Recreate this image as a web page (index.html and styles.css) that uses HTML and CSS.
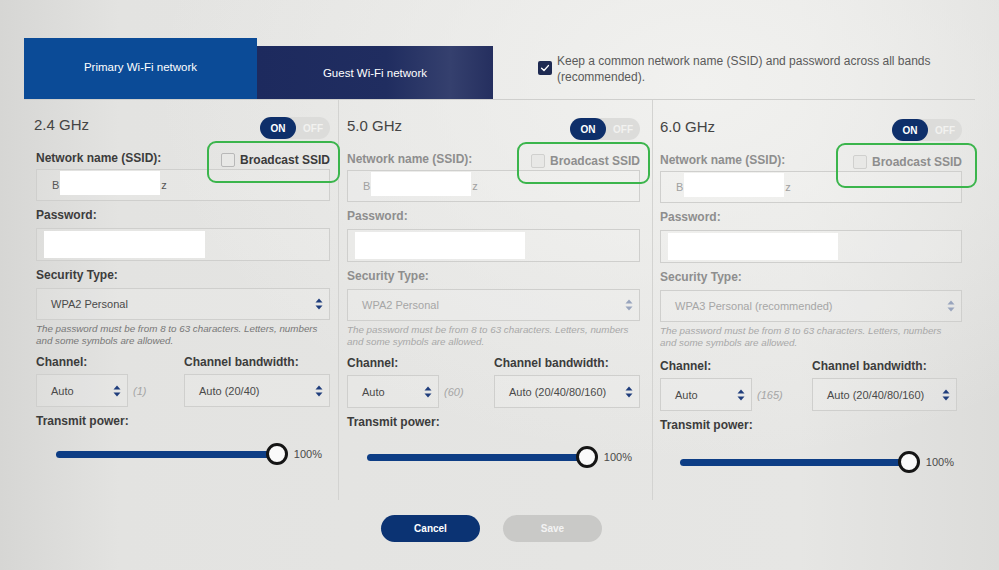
FILE: index.html
```html
<!DOCTYPE html>
<html lang="en">
<head>
<meta charset="utf-8">
<title>Wi-Fi settings</title>
<link rel="stylesheet" href="styles.css">
</head>
<body>
<div class="page">
  <div class="top">
    <div class="tabs">
      <div class="tab tab-primary">Primary Wi-Fi network</div>
      <div class="tab tab-guest">Guest Wi-Fi network</div>
    </div>
    <div class="common">
      <span class="cb-checked"><svg viewBox="0 0 14 14" width="14" height="14"><path d="M3.6 7.2 L6 9.5 L10.4 4.6" fill="none" stroke="#fff" stroke-width="1.4" stroke-linecap="round" stroke-linejoin="round"/></svg></span>
      <span class="common-text">Keep a common network name (SSID) and password across all bands<br>(recommended).</span>
    </div>
  </div>

  <div class="bands">
    <section class="band band-1">
      <div class="band-head"><h2>2.4 GHz</h2><div class="toggle"><span class="on">ON</span><span class="off">OFF</span></div></div>
      <div class="label-row"><span class="label">Network name (SSID):</span><span class="broadcast"><span class="box"></span>Broadcast SSID</span></div>
      <div class="field"><span class="val">B</span><span class="redact redact-ssid"></span><span class="val">z</span></div>
      <div class="label">Password:</div>
      <div class="field field-pw"><span class="redact redact-pw"></span></div>
      <div class="label">Security Type:</div>
      <div class="select"><span>WPA2 Personal</span><svg class="spin" viewBox="0 0 8 12" width="8" height="12"><path d="M4 0.5 L7.5 4.5 H0.5 Z M0.5 7.5 H7.5 L4 11.5 Z"/></svg></div>
      <p class="help">The password must be from 8 to 63 characters. Letters, numbers<br>and some symbols are allowed.</p>
      <div class="chan-grid">
        <div class="label">Channel:</div>
        <div class="label">Channel bandwidth:</div>
        <div class="chan-cell"><div class="select select-chan"><span>Auto</span><svg class="spin" viewBox="0 0 8 12" width="8" height="12"><path d="M4 0.5 L7.5 4.5 H0.5 Z M0.5 7.5 H7.5 L4 11.5 Z"/></svg></div><span class="chan-num">(1)</span></div>
        <div class="select"><span>Auto (20/40)</span><svg class="spin" viewBox="0 0 8 12" width="8" height="12"><path d="M4 0.5 L7.5 4.5 H0.5 Z M0.5 7.5 H7.5 L4 11.5 Z"/></svg></div>
      </div>
      <div class="label">Transmit power:</div>
      <div class="slider"><div class="track"></div><div class="thumb"></div><span class="pct">100%</span></div>
    </section>

    <section class="band band-2">
      <div class="band-head"><h2>5.0 GHz</h2><div class="toggle"><span class="on">ON</span><span class="off">OFF</span></div></div>
      <div class="label-row"><span class="label muted">Network name (SSID):</span><span class="broadcast muted"><span class="box"></span>Broadcast SSID</span></div>
      <div class="field"><span class="val muted">B</span><span class="redact redact-ssid"></span><span class="val muted">z</span></div>
      <div class="label muted">Password:</div>
      <div class="field field-pw"><span class="redact redact-pw wide"></span></div>
      <div class="label muted">Security Type:</div>
      <div class="select muted"><span>WPA2 Personal</span><svg class="spin" viewBox="0 0 8 12" width="8" height="12"><path d="M4 0.5 L7.5 4.5 H0.5 Z M0.5 7.5 H7.5 L4 11.5 Z"/></svg></div>
      <p class="help muted">The password must be from 8 to 63 characters. Letters, numbers<br>and some symbols are allowed.</p>
      <div class="chan-grid">
        <div class="label">Channel:</div>
        <div class="label">Channel bandwidth:</div>
        <div class="chan-cell"><div class="select select-chan"><span>Auto</span><svg class="spin" viewBox="0 0 8 12" width="8" height="12"><path d="M4 0.5 L7.5 4.5 H0.5 Z M0.5 7.5 H7.5 L4 11.5 Z"/></svg></div><span class="chan-num">(60)</span></div>
        <div class="select"><span>Auto (20/40/80/160)</span><svg class="spin" viewBox="0 0 8 12" width="8" height="12"><path d="M4 0.5 L7.5 4.5 H0.5 Z M0.5 7.5 H7.5 L4 11.5 Z"/></svg></div>
      </div>
      <div class="label">Transmit power:</div>
      <div class="slider"><div class="track"></div><div class="thumb"></div><span class="pct">100%</span></div>
    </section>

    <section class="band band-3">
      <div class="band-head"><h2>6.0 GHz</h2><div class="toggle"><span class="on">ON</span><span class="off">OFF</span></div></div>
      <div class="label-row"><span class="label muted">Network name (SSID):</span><span class="broadcast muted"><span class="box"></span>Broadcast SSID</span></div>
      <div class="field"><span class="val muted">B</span><span class="redact redact-ssid"></span><span class="val muted">z</span></div>
      <div class="label muted">Password:</div>
      <div class="field field-pw"><span class="redact redact-pw wide"></span></div>
      <div class="label muted">Security Type:</div>
      <div class="select muted"><span>WPA3 Personal (recommended)</span><svg class="spin" viewBox="0 0 8 12" width="8" height="12"><path d="M4 0.5 L7.5 4.5 H0.5 Z M0.5 7.5 H7.5 L4 11.5 Z"/></svg></div>
      <p class="help muted">The password must be from 8 to 63 characters. Letters, numbers<br>and some symbols are allowed.</p>
      <div class="chan-grid">
        <div class="label">Channel:</div>
        <div class="label">Channel bandwidth:</div>
        <div class="chan-cell"><div class="select select-chan"><span>Auto</span><svg class="spin" viewBox="0 0 8 12" width="8" height="12"><path d="M4 0.5 L7.5 4.5 H0.5 Z M0.5 7.5 H7.5 L4 11.5 Z"/></svg></div><span class="chan-num">(165)</span></div>
        <div class="select"><span>Auto (20/40/80/160)</span><svg class="spin" viewBox="0 0 8 12" width="8" height="12"><path d="M4 0.5 L7.5 4.5 H0.5 Z M0.5 7.5 H7.5 L4 11.5 Z"/></svg></div>
      </div>
      <div class="label">Transmit power:</div>
      <div class="slider"><div class="track"></div><div class="thumb"></div><span class="pct">100%</span></div>
    </section>
  </div>

  <div class="actions">
    <button class="btn btn-cancel" type="button">Cancel</button>
    <button class="btn btn-save" type="button">Save</button>
  </div>
</div>
</body>
</html>
```

FILE: styles.css
```css
* { box-sizing: border-box; }
html, body { margin: 0; padding: 0; }
body {
  width: 999px;
  height: 570px;
  overflow: hidden;
  font-family: "Liberation Sans", Arial, sans-serif;
  color: #3a3a3a;
  background:
    radial-gradient(ellipse at 70% 15%, #f1f1ef 0%, rgba(241,241,239,0) 55%),
    linear-gradient(90deg, #d6d6d4 0%, #e3e3e1 12%, #e6e6e4 80%, #dcdcda 100%);
}
.page {
  padding: 37px 24px 0 24px;
}

/* top bar */
.top {
  display: flex;
  align-items: flex-start;
  width: 951px;
  border-bottom: 1px solid #cfcfcd;
  height: 63px;
}
.tabs {
  display: flex;
  align-items: flex-end;
  height: 62px;
}
.tab {
  color: #fff;
  font-size: 11.5px;
  display: flex;
  align-items: center;
  justify-content: center;
}
.tab-primary {
  width: 233px;
  height: 61px;
  background: #0b4b97;
  padding-bottom: 3px;
}
.tab-guest {
  width: 236px;
  height: 53px;
  background: linear-gradient(90deg, #1d2a5e 0%, #202d60 55%, #35406e 82%, #252f5f 100%);
}
.common {
  display: flex;
  align-items: flex-start;
  gap: 5px;
  margin-left: 45px;
  margin-top: 16px;
}
.cb-checked {
  width: 14px;
  height: 14px;
  border-radius: 2px;
  background: #1e2a52;
  margin-top: 8px;
  flex: none;
  display: flex;
}
.common-text {
  font-size: 12px;
  line-height: 16px;
  color: #5a5a5a;
}

/* bands */
.bands {
  display: grid;
  grid-template-columns: 314px 314px 318px;
  width: 946px;
}
.band {
  padding: 17px 10px 0 10px;
  height: 400px;
}
.band-2, .band-3 { border-left: 1px solid #d3d3d1; }
.band-1 { padding-left: 12px; padding-right: 8px; }
.band-2 { padding-left: 8px; padding-right: 12px; padding-top: 18px; }
.band-3 { padding-left: 7px; padding-right: 8px; padding-top: 19px; }

.band-head {
  display: flex;
  justify-content: space-between;
  align-items: center;
  height: 22px;
}
.band-head h2 {
  margin: 0 0 0 -2px;
  font-size: 15px;
  font-weight: normal;
  color: #444;
  position: relative;
  top: -4px;
}
.band-2 .band-head h2, .band-3 .band-head h2 { margin-left: 0; }
.toggle {
  width: 70px;
  height: 22px;
  border-radius: 11px;
  background: #dcdcda;
  display: flex;
  align-items: center;
  font-size: 10px;
  font-weight: bold;
}
.toggle .on {
  width: 36px;
  height: 22px;
  border-radius: 11px;
  background: #0e2f6a;
  color: #fff;
  display: flex;
  align-items: center;
  justify-content: center;
}
.toggle .off {
  flex: 1;
  text-align: center;
  color: #f2f2f0;
}

.label {
  font-size: 12px;
  font-weight: bold;
  color: #3c3c3c;
  line-height: 16px;
}
.label.muted { color: #8e8e8e; }

.label-row {
  display: flex;
  justify-content: space-between;
  align-items: center;
  margin-top: 11px;
  height: 16px;
}
.broadcast {
  position: relative;
  display: flex;
  align-items: center;
  gap: 5px;
  font-size: 12px;
  font-weight: bold;
  color: #3a3a3a;
  margin-top: 3px;
}
.broadcast.muted { color: #8e8e8e; }
.broadcast .box {
  width: 14px;
  height: 14px;
  border: 1px solid #b8b8b8;
  border-radius: 2px;
  background: #e8e8e6;
}
.broadcast.muted .box { border-color: #d0d0ce; }
.broadcast::after {
  content: "";
  position: absolute;
  left: -14px;
  right: -10px;
  top: -12px;
  bottom: -16px;
  border: 2px solid #3bb54c;
  border-radius: 9px;
}
.band-3 .broadcast::after { left: -17px; right: -15px; bottom: -19px; }

.field {
  margin-top: 3px;
  height: 32px;
  border: 1px solid #cfcfcd;
  background: rgba(255,255,255,0.12);
  display: flex;
  align-items: center;
  padding-left: 15px;
  font-size: 11px;
  color: #555;
}
.field .val.muted { color: #a0a0a0; }
.redact {
  background: #fff;
  display: block;
}
.redact-ssid {
  width: 100px;
  height: 24px;
  margin: 0 1px 4px 1px;
}
.field-pw {
  margin-top: 5px;
  height: 33px;
  padding-left: 7px;
}
.redact-pw {
  width: 161px;
  height: 27px;
}
.redact-pw.wide { width: 170px; }

.field + .label { margin-top: 6px; }
.select {
  margin-top: 5px;
  height: 32px;
  border: 1px solid #cfcfcd;
  background: rgba(255,255,255,0.12);
  display: flex;
  align-items: center;
  justify-content: space-between;
  padding: 0 6px 0 14px;
  font-size: 11px;
  color: #4a4a4a;
}
.select .spin { fill: #1f3d7c; flex: none; }
.select.muted { color: #a6a6a6; }
.select.muted .spin { fill: #98a4bd; }

.help {
  margin: 3px 0 0 0;
  font-size: 9.8px;
  font-style: italic;
  line-height: 12px;
  color: #777;
}
.help.muted { color: #a8a8a8; }

.chan-grid {
  display: grid;
  grid-template-columns: 1fr 146px;
  margin-top: 7px;
  row-gap: 4px;
}
.band-3 .chan-grid { margin-top: 9px; grid-template-columns: 1fr 150px; }
.band-3 .chan-grid .select:last-child { margin-right: 5px; }
.chan-grid .select { margin-top: 0; height: 33px; }
.chan-cell {
  display: flex;
  align-items: center;
  gap: 5px;
}
.select-chan { width: 92px; }
.chan-num {
  font-size: 11px;
  font-style: italic;
  color: #a5a5a5;
}
.chan-grid + .label { margin-top: 6px; }

.slider {
  display: flex;
  align-items: center;
  margin-top: 14px;
  padding-left: 20px;
  padding-right: 8px;
  height: 22px;
}
.band-2 .slider { margin-top: 16px; }
.band-3 .slider { margin-top: 18px; }
.track {
  flex: 1;
  height: 7px;
  border-radius: 4px;
  background: #0d3d85;
  margin-right: -6px;
}
.thumb {
  width: 22px;
  height: 22px;
  border-radius: 50%;
  background: #fafafa;
  border: 3px solid #151515;
  position: relative;
}
.pct {
  margin-left: 6px;
  font-size: 11px;
  color: #4a4a4a;
}

.actions {
  display: flex;
  justify-content: center;
  gap: 23px;
  margin-top: 15px;
  padding-right: 16px;
  width: 951px;
}
.btn {
  width: 99px;
  height: 27px;
  border-radius: 14px;
  border: none;
  font-family: "Liberation Sans", Arial, sans-serif;
  font-size: 10px;
  font-weight: bold;
  color: #fff;
  padding: 0;
}
.btn-cancel { background: #0b3373; }
.btn-save { background: #c9c9c7; color: #f3f3f3; }
```
